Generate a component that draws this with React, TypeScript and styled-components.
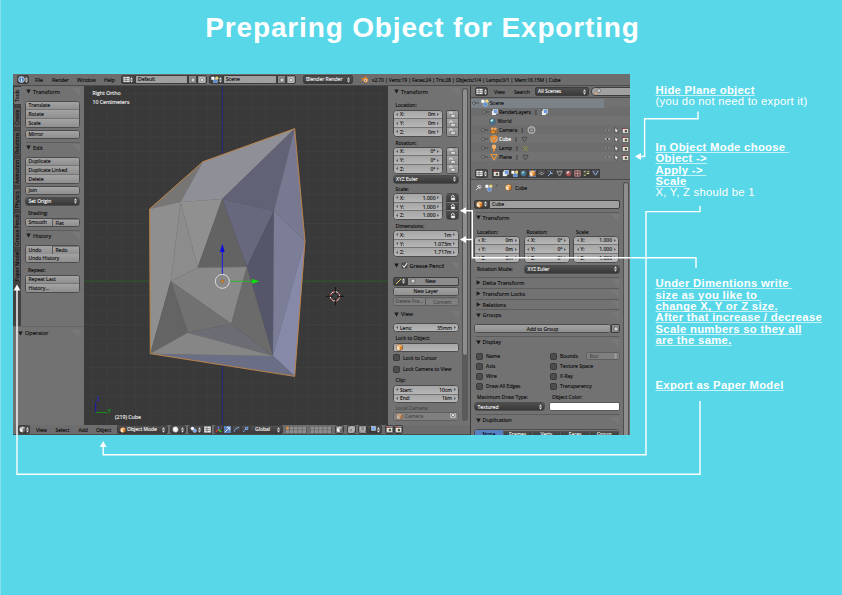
import React from "react";
import styled, { createGlobalStyle, css } from "styled-components";

const Global = createGlobalStyle`
  * { box-sizing: border-box; }
  body { margin: 0; background: #57d7e8; }
  svg { flex: none; }
`;

const Page = styled.main`
  position: relative;
  width: 842px;
  height: 595px;
  overflow: hidden;
  background: #57d7e8;
  border-left: 1px solid #86e1ee;
  font-family: "Liberation Sans", Arial, sans-serif;
  color: #fff;
`;
const Title = styled.h1`
  margin: 0;
  height: 74px;
  padding-top: 10px;
  padding-left: 2px;
  text-align: center;
  font-size: 28px;
  line-height: 36px;
  font-weight: 700;
  letter-spacing: 0.84px;
`;
const Body = styled.div`
  display: flex;
  padding-left: 12px;
`;

/* ---------- side notes ---------- */
const Notes = styled.aside`
  width: 180px;
  flex: none;
  margin-left: 25.5px;
  font-size: 11.3px;
  line-height: 11.33px;
  white-space: pre;
`;
const Note = styled.section<{ $top: number }>`
  margin-top: ${(p) => p.$top}px;
`;
const Strong = styled.div`
  font-weight: 700;
  letter-spacing: 0.3px;
  text-decoration: underline;
  text-decoration-thickness: 1px;
  text-underline-offset: 1px;
  text-decoration-skip-ink: none;
  text-decoration-color: rgba(255, 255, 255, 0.65);
`;
const Plain = styled.div`
  letter-spacing: 0.25px;
`;
const Arrows = styled.svg`
  position: absolute;
  left: -1px;
  top: 0;
  pointer-events: none;
`;

/* ---------- application window ---------- */
const Window = styled.div`
  width: 617px;
  height: 361px;
  flex: none;
  overflow: hidden;
  background: #727272;
  color: #0a0a0a;
  font-family: "Open Sans", "Noto Sans", sans-serif;
  font-size: 5px;
  line-height: 8px;
  -webkit-text-stroke: 0.12px currentColor;
  white-space: nowrap;
  display: flex;
  flex-direction: column;
`;
const Bar = styled.div<{ $h: number }>`
  height: ${(p) => p.$h}px;
  flex: none;
  display: flex;
  align-items: center;
  background: #6d6d6d;
  border-bottom: 1px solid #4b4b4b;
  overflow: hidden;
`;
const Split = styled.div`
  flex: 1;
  min-height: 0;
  display: flex;
`;
const Col = styled.div<{ $w: number }>`
  width: ${(p) => p.$w}px;
  flex: none;
  display: flex;
  flex-direction: column;
  min-height: 0;
`;
const Gap = styled.span<{ $w: number }>`
  width: ${(p) => p.$w}px;
  flex: none;
`;
const MenuItem = styled.span<{ $w: number }>`
  width: ${(p) => p.$w}px;
  flex: none;
`;
const Tabs = styled.div`
  width: 8px;
  height: 240px;
  background: #424242;
  display: flex;
  flex-direction: column;
  gap: 2px;
`;
const Tab = styled.div<{ $h: number; $on?: boolean }>`
  height: ${(p) => p.$h}px;
  width: 8px;
  flex: none;
  border: 1px solid #3c3c3c;
  border-left-width: ${(p) => (p.$on ? 0 : 1)}px;
  border-radius: 0 2px 2px 0;
  background: ${(p) => (p.$on ? "#747474" : "#585858")};
  writing-mode: vertical-rl;
  transform: rotate(180deg);
  text-align: center;
  line-height: 6px;
  font-size: 5px;
`;
const ToolSplit = styled.div`
  display: flex;
  height: 240px;
`;
const Panel = styled.div<{ $px: number; $pr: number }>`
  flex: 1;
  min-width: 0;
  padding: 0 ${(p) => p.$pr}px 0 ${(p) => p.$px}px;
  background: #727272;
  overflow: hidden;
`;
const HeaderRow = styled.div<{ $top: number; $line?: boolean; $in?: number }>`
  display: flex;
  align-items: center;
  height: 10px;
  margin-top: ${(p) => p.$top}px;
  margin-left: ${(p) => p.$in ?? 0}px;
  gap: 2px;
  font-size: 5.5px;
  ${(p) =>
    p.$line &&
    css`
      box-shadow: 0 -1px 0 #5c5c5c;
    `}
  & > svg:last-child {
    margin-left: auto;
  }
`;
const Label = styled.div<{ $top: number; $in?: number; $dim?: boolean }>`
  height: 8px;
  margin-top: ${(p) => p.$top}px;
  padding-left: ${(p) => p.$in ?? 3}px;
  color: ${(p) => (p.$dim ? "#484848" : "#0a0a0a")};
`;
const Group = styled.div<{ $h: number; $top?: number; $w?: number; $num?: boolean; $off?: boolean }>`
  height: ${(p) => p.$h}px;
  margin-top: ${(p) => p.$top ?? 0}px;
  ${(p) => (p.$w ? `width:${p.$w}px; flex:none;` : "")}
  border: 1px solid ${(p) => (p.$off ? "#5f5f5f" : "#4c4c4c")};
  border-radius: ${(p) => (p.$num ? 4 : 2.5)}px;
  overflow: hidden;
  display: flex;
  flex-direction: column;
  background: ${(p) => (p.$off ? "#808080" : p.$num ? "#adadad" : "#999")};
`;
const Cell = styled.div<{ $tone?: "num" | "dark" | "blue" | "off" | "field" }>`
  flex: 1 1 0;
  min-height: 0;
  min-width: 0;
  display: flex;
  align-items: center;
  justify-content: space-between;
  padding: 0 2.5px;
  overflow: hidden;
  background: ${(p) =>
    ({
      num: "linear-gradient(#a6a6a6,#b6b6b6)",
      dark: "linear-gradient(#4e4e4e,#383838)",
      blue: "#5680c2",
      off: "#808080",
      field: "#a5a5a5",
      none: "linear-gradient(#a3a3a3,#8f8f8f)",
    })[p.$tone ?? "none"]};
  color: ${(p) => (p.$tone === "dark" ? "#f4f4f4" : p.$tone === "off" ? "#4a4a4a" : "#0a0a0a")};
  & + & {
    border-top: 1px solid #767676;
  }
`;
const Centered = styled(Cell)`
  justify-content: center;
  padding: 0;
`;
const Across = styled.div`
  flex: 1 1 0;
  min-height: 0;
  display: flex;
  & > div + div {
    border-top: 0;
    border-left: 1px solid #5a5a5a;
  }
`;
const Row = styled.div<{ $top?: number; $gap?: number; $in?: number }>`
  display: flex;
  align-items: flex-start;
  margin-top: ${(p) => p.$top ?? 0}px;
  gap: ${(p) => p.$gap ?? 0}px;
  padding-left: ${(p) => p.$in ?? 0}px;
`;
const Num = styled.span`
  margin-left: auto;
`;
const Key = styled.span`
  margin-left: 2px;
`;
const Pill = styled.div<{ $w: number; $tone?: "dark" | "light" | "blue" | "off" | "field"; $r?: string }>`
  width: ${(p) => p.$w}px;
  height: 9px;
  flex: none;
  display: flex;
  align-items: center;
  justify-content: ${(p) => (p.$w <= 10 ? "center" : "space-between")};
  padding: 0 ${(p) => (p.$w <= 13 ? 0 : p.$w <= 16 ? 1 : 2)}px;
  overflow: hidden;
  border: 1px solid #3d3d3d;
  border-radius: ${(p) => p.$r ?? "2px"};
  line-height: 7px;
  background: ${(p) =>
    ({ dark: "linear-gradient(#505050,#3a3a3a)", light: "#8c8c8c", blue: "#5680c2", off: "#7c7c7c", field: "#a0a0a0" })[
      p.$tone ?? "dark"
    ]};
  color: ${(p) => ((p.$tone ?? "dark") === "dark" ? "#f2f2f2" : "#0a0a0a")};
`;
const CheckRow = styled.div<{ $w?: number; $top?: number }>`
  display: flex;
  align-items: center;
  height: 8px;
  gap: 3.5px;
  margin-top: ${(p) => p.$top ?? 0}px;
  ${(p) => (p.$w ? `width:${p.$w}px; flex:none;` : "")}
`;
const Box = styled.i`
  width: 7px;
  height: 7px;
  flex: none;
  border: 1px solid #3a3a3a;
  border-radius: 1.5px;
  background: #4c4c4c;
`;
const Scroll = styled.div<{ $thumb: number; $top: number; $h: number }>`
  width: 6px;
  flex: none;
  height: ${(p) => p.$h}px;
  margin-top: ${(p) => p.$top}px;
  border-radius: 3px;
  background: #5a5a5a;
  &::before {
    content: "";
    display: block;
    height: ${(p) => p.$thumb}px;
    border-radius: 3px;
    border: 1px solid #505050;
    background: #8e8e8e;
  }
`;
const Viewport = styled.div`
  width: 304px;
  height: 339px;
  flex: none;
  background: #393939;
  position: relative;
  color: #f2f2f2;
`;
const Scene = styled.svg`
  display: block;
`;
const Overlay = styled.div<{ $x: number; $y: number }>`
  position: absolute;
  left: ${(p) => p.$x}px;
  top: ${(p) => p.$y}px;
  font-size: 5.2px;
  line-height: 9px;
`;
const Operator = styled.div`
  height: 99px;
  background: #727272;
  border-top: 1px solid #656565;
  padding: 1px 4px 0 5px;
`;
const Outliner = styled.div`
  height: 70px;
  padding-top: 0.5px;
  background: repeating-linear-gradient(#727272 0 9px, #6d6d6d 9px 18px);
`;
const TreeRow = styled.div<{ $in: number; $hot?: boolean }>`
  height: 9px;
  display: flex;
  align-items: center;
  padding-left: ${(p) => p.$in}px;
  gap: 1.5px;
  background: ${(p) => (p.$hot ? "linear-gradient(90deg,#7b8389 133px,transparent 133px)" : "none")};
`;
const White = styled.span`
  color: #fff;
`;
const Toggles = styled.span`
  margin-left: auto;
  width: 26px;
  flex: none;
  display: flex;
  align-items: center;
  gap: 2px;
`;
const Pipe = styled.span`
  margin: 0 2px;
`;

/* ---------- icons ---------- */
const Tri = ({ open }: { open?: boolean }) => (
  <svg width="5" height="5" viewBox="0 0 5 5">
    <path d={open ? "M.2 .6H4.8L2.5 4.4Z" : "M.6 .2V4.8L4.6 2.5Z"} fill="#1c1c1c" />
  </svg>
);
const Grip = () => (
  <svg width="7" height="7" viewBox="0 0 7 7" stroke="#8a8a8a" strokeWidth=".6">
    <path d="M0 0L7 7M2.5 0L7 4.5M5 0L7 2" />
  </svg>
);
const UpDown = ({ c = "#ddd" }: { c?: string }) => (
  <svg width="3" height="6" viewBox="0 0 3 6">
    <path d="M0 2.4L1.5 .2L3 2.4ZM0 3.6L1.5 5.8L3 3.6Z" fill={c} />
  </svg>
);
const Nub = ({ right }: { right?: boolean }) => (
  <svg width="2" height="3" viewBox="0 0 2 3">
    <path d={right ? "M0 0L2 1.5L0 3Z" : "M2 0L0 1.5L2 3Z"} fill="#5a5a5a" />
  </svg>
);
const Cube = ({ s = 7, dim }: { s?: number; dim?: boolean }) => (
  <svg width={s} height={s} viewBox="0 0 8 8" opacity={dim ? 0.55 : 1}>
    <path d="M4 .4L7.4 1.8V6L4 7.7L.6 6V1.8Z" fill="#d9822b" stroke="#5b3511" strokeWidth=".5" />
    <path d="M4 .6L7.2 1.9L4.2 3.2L.8 1.9Z" fill="#f6c48a" />
    <path d="M.8 2L4.1 3.3V7.5L.8 5.9Z" fill="#fbe3c6" />
  </svg>
);
const GreyCube = () => (
  <svg width="7" height="7" viewBox="0 0 8 8">
    <path d="M4 .4L7.4 1.8V6L4 7.7L.6 6V1.8Z" fill="#777" stroke="#222" strokeWidth=".5" />
    <path d="M.8 1.9L4.1 3.3V7.5L.8 5.9Z" fill="#f2f2f2" />
    <path d="M4 .6L7.2 1.9L4.2 3.2L.8 1.9Z" fill="#c8c8c8" />
  </svg>
);
const Lock = ({ shut }: { shut?: boolean }) => (
  <svg width="7" height="7" viewBox="0 0 8 8">
    <path d={shut ? "M2.8 4V2.3Q4.3 .3 5.8 2.3V4" : "M.8 3.2V1.8Q2.2 .2 3.6 1.8V4"} fill="none" stroke="#eee" strokeWidth="1" />
    <path d="M2.2 4H7V7.2H2.2Z" fill={shut ? "#f4f4f4" : "#dedede"} stroke="#444" strokeWidth=".4" />
  </svg>
);
const Plus = () => (
  <svg width="6" height="6" viewBox="0 0 6 6">
    <path d="M2.2 .5H3.8V2.2H5.5V3.8H3.8V5.5H2.2V3.8H.5V2.2H2.2Z" fill="#eee" stroke="#444" strokeWidth=".5" />
  </svg>
);
const Cross = () => (
  <svg width="6" height="6" viewBox="0 0 6 6">
    <rect x=".4" y=".4" width="5.2" height="5.2" rx="1" fill="none" stroke="#ddd" strokeWidth=".7" />
    <path d="M1.5 1.5L4.5 4.5M4.5 1.5L1.5 4.5" stroke="#eee" strokeWidth=".9" />
  </svg>
);
const Dot = ({ a, b }: { a: string; b?: string }) => (
  <svg width="7" height="7" viewBox="0 0 8 8">
    <circle cx="4" cy="4" r="3.3" fill={a} stroke="#333" strokeWidth=".4" />
    <path d="M1.6 3Q3 .8 5 1.6Q4.6 3.6 2.6 4.4Z" fill={b ?? "#fff"} />
  </svg>
);
const InfoIcon = () => (
  <svg width="7" height="7" viewBox="0 0 8 8">
    <circle cx="4" cy="4" r="3.3" fill="#4a7cc0" stroke="#e8eefa" strokeWidth=".9" />
    <path d="M4 1.8V2.8M4 3.5V6.2" stroke="#fff" strokeWidth="1.1" />
  </svg>
);
const Sheet = ({ a = "#eee", b = "#6d9be0" }: { a?: string; b?: string }) => (
  <svg width="7" height="7" viewBox="0 0 8 8">
    <rect x=".8" y="1.5" width="5" height="5.6" fill={a} stroke="#444" strokeWidth=".4" />
    <rect x="3" y=".6" width="4.3" height="4.3" fill={b} stroke="#eee" strokeWidth=".6" />
  </svg>
);
const SceneIcon = () => (
  <svg width="8" height="8" viewBox="0 0 8 8">
    <rect x=".4" y=".8" width="3" height="3" fill="#fff" />
    <circle cx="5.8" cy="2.2" r="1.6" fill="#f0d77a" />
    <circle cx="4.4" cy="5.4" r="2.1" fill="#5b8fd6" stroke="#dde" strokeWidth=".4" />
  </svg>
);
const Stroke = ({ d, c = "#ddd", s = 7 }: { d: string; c?: string; s?: number }) => (
  <svg width={s} height={s} viewBox="0 0 8 8">
    <path d={d} fill="none" stroke={c} strokeWidth="1.1" strokeLinejoin="round" />
  </svg>
);
const EditorIcon = () => (
  <svg width="7" height="7" viewBox="0 0 8 8">
    <rect x=".5" y="1" width="7" height="6" fill="#eee" />
    <path d="M1 3H7M1 5H7M3.5 1V7" stroke="#555" strokeWidth=".7" />
  </svg>
);
const MESH = "M1 1.5H7L4 7Z";
const CamIcon = () => (
  <svg width="8" height="7" viewBox="0 0 9 8">
    <circle cx="2.6" cy="2.2" r="1.7" fill="#f0a050" />
    <circle cx="6" cy="2.2" r="1.7" fill="#f0a050" />
    <path d="M.8 4H6V7.4H.8ZM6 5.5L8.6 4.2V7.2Z" fill="#e88a2d" stroke="#7a4310" strokeWidth=".4" />
  </svg>
);
const Eye = ({ on }: { on?: boolean }) => (
  <svg width="7" height="6" viewBox="0 0 8 6" opacity={on ? 1 : 0.3}>
    <path d="M.5 3Q4 -.5 7.5 3Q4 6 .5 3Z" fill="#eee" stroke="#333" strokeWidth=".3" />
    <circle cx="4" cy="3" r="1.2" fill="#222" />
  </svg>
);
const Pointer = () => (
  <svg width="7" height="7" viewBox="0 0 8 8">
    <path d="M2.2 .6L6.6 4.8L4.6 5L5.6 7.2L4.4 7.6L3.5 5.5L2.2 6.5Z" fill="#f4f4f4" stroke="#222" strokeWidth=".6" />
  </svg>
);
const Photo = () => (
  <svg width="7" height="7" viewBox="0 0 8 8">
    <rect x=".5" y="2" width="7" height="5" fill="#e4e4e4" stroke="#333" strokeWidth=".5" />
    <path d="M1 1.5H4" stroke="#c33" />
    <circle cx="4.5" cy="4.5" r="1.5" fill="#553" />
  </svg>
);

/* ---------- composed parts ---------- */
type HeaderProps = { t: string; top: number; open?: boolean; line?: boolean; x?: number; mid?: React.ReactNode };
const Header = ({ t, top, open = true, line, x, mid }: HeaderProps) => (
  <HeaderRow $top={top} $line={line} $in={x}>
    <Tri open={open} />
    {mid}
    <span>{t}</span>
    <Grip />
  </HeaderRow>
);
const NumCell = ({ k, v }: { k: string; v: string }) => (
  <Cell $tone="num">
    <Nub />
    <Key>{k}</Key>
    <Num>{v}</Num>
    <Gap $w={1.5} />
    <Nub right />
  </Cell>
);
const XYZ = ({ v, w, top = 0 }: { v: string[]; w: number; top?: number }) => (
  <Group $num $h={27} $w={w} $top={top}>
    {["X:", "Y:", "Z:"].map((k, i) => (
      <NumCell key={k} k={k} v={v[i]} />
    ))}
  </Group>
);
const Locks = ({ shut }: { shut?: boolean }) => (
  <Group $h={27} $w={13}>
    {[0, 1, 2].map((i) => (
      <Centered key={i} $tone={shut ? "dark" : undefined}>
        <Lock shut={shut} />
      </Centered>
    ))}
  </Group>
);
const Drop = ({ t, h = 9, top = 0, w, off }: { t: string; h?: number; top?: number; w?: number; off?: boolean }) => (
  <Group $h={h} $top={top} $w={w} $off={off}>
    <Cell $tone={off ? "off" : "dark"}>
      {t}
      <UpDown c={off ? "#aaa" : "#ddd"} />
    </Cell>
  </Group>
);
const Check = ({ t, w, top }: { t: string; w?: number; top?: number }) => (
  <CheckRow $w={w} $top={top}>
    <Box />
    {t}
  </CheckRow>
);

const TopBar = () => (
  <Bar $h={12}>
    <Gap $w={4} />
    <Pill $w={12}>
      <InfoIcon />
      <UpDown />
    </Pill>
    <Gap $w={6} />
    <MenuItem $w={17}>File</MenuItem>
    <MenuItem $w={25}>Render</MenuItem>
    <MenuItem $w={27}>Window</MenuItem>
    <MenuItem $w={17}>Help</MenuItem>
    <Pill $w={14} $r="2px 0 0 2px">
      <EditorIcon />
      <UpDown />
    </Pill>
    <Pill $w={53} $tone="field" $r="0">
      Default
    </Pill>
    <Pill $w={9} $tone="light" $r="0">
      <Plus />
    </Pill>
    <Pill $w={10} $tone="light" $r="0 2px 2px 0">
      <Cross />
    </Pill>
    <Gap $w={2} />
    <Pill $w={14} $r="2px 0 0 2px">
      <SceneIcon />
      <UpDown />
    </Pill>
    <Pill $w={54} $tone="field" $r="0">
      Scene
    </Pill>
    <Pill $w={9} $tone="light" $r="0">
      <Plus />
    </Pill>
    <Pill $w={10} $tone="light" $r="0 2px 2px 0">
      <Cross />
    </Pill>
    <Gap $w={7} />
    <Pill $w={50}>
      <span>Blender Render</span>
      <UpDown />
    </Pill>
    <Gap $w={8} />
    <svg width="8" height="7" viewBox="0 0 9 8">
      <path d="M.5 5.4L5 1.2L7.5 3M.8 3H5" stroke="#f08a24" strokeWidth="1.1" fill="none" />
      <circle cx="5.4" cy="4.8" r="2.6" fill="#f08a24" />
      <circle cx="5.4" cy="4.8" r="1.4" fill="#fff" />
      <circle cx="5.4" cy="4.8" r=".8" fill="#2a5a9a" />
    </svg>
    <Gap $w={3} />
    <Status>v2.70 | Verts:19 | Faces:24 | Tris:28 | Objects:1/4 | Lamps:0/1 | Mem:16.15M | Cube</Status>
  </Bar>
);
const Status = styled.span`
  letter-spacing: -0.11px;
`;

const ToolShelf = () => (
  <Col $w={71}>
    <ToolSplit>
      <Tabs>
        <Tab $h={19} $on>Tools</Tab>
        <Tab $h={21}>Create</Tab>
        <Tab $h={26}>Relations</Tab>
        <Tab $h={28}>Animation</Tab>
        <Tab $h={22}>Physics</Tab>
        <Tab $h={36}>Grease Pencil</Tab>
        <Tab $h={32}>Paper Model</Tab>
      </Tabs>
      <Panel $px={4} $pr={4}>
        <Header t="Transform" top={0.5} x={1} />
        <Group $h={27} $top={4}>
          <Cell>Translate</Cell>
          <Cell>Rotate</Cell>
          <Cell>Scale</Cell>
        </Group>
        <Group $h={9} $top={2}>
          <Cell>Mirror</Cell>
        </Group>
        <Header t="Edit" top={4} line x={1} />
        <Group $h={27} $top={4}>
          <Cell>Duplicate</Cell>
          <Cell>Duplicate Linked</Cell>
          <Cell>Delete</Cell>
        </Group>
        <Group $h={9} $top={2}>
          <Cell>Join</Cell>
        </Group>
        <Drop t="Set Origin" top={2} />
        <Label $top={3}>Shading:</Label>
        <Group $h={9} $top={1}>
          <Across>
            <Cell>Smooth</Cell>
            <Cell>Flat</Cell>
          </Across>
        </Group>
        <Header t="History" top={4} line x={1} />
        <Group $h={18} $top={4}>
          <Across>
            <Cell>Undo</Cell>
            <Cell>Redo</Cell>
          </Across>
          <Cell>Undo History</Cell>
        </Group>
        <Label $top={3}>Repeat:</Label>
        <Group $h={18} $top={1}>
          <Cell>Repeat Last</Cell>
          <Cell>History...</Cell>
        </Group>
      </Panel>
    </ToolSplit>
    <Operator>
      <Header t="Operator" top={0} />
    </Operator>
  </Col>
);

const FACES: [string, string][] = [
  ["59,297 219,155 152,276", "#787674"],
  ["219,155 494,56 277,267 152,276", "#8f8f97"],
  ["59,297 152,276 122,514 61,731", "#8f8f8f"],
  ["152,276 277,267 203,473", "#909090"],
  ["152,276 203,473 122,514", "#8c8c8c"],
  ["277,267 203,473 351,471", "#636363"],
  ["277,267 494,56 432,303", "#616276"],
  ["277,267 432,303 351,471", "#67687d"],
  ["432,303 351,471 429,738", "#55566a"],
  ["494,56 432,303 525,393", "#787991"],
  ["432,303 525,393 429,738", "#7c7d97"],
  ["525,393 494,799 429,738", "#8789a8"],
  ["61,731 429,738 494,799", "#6b6f86"],
  ["122,514 203,473 351,471 304,641", "#898989"],
  ["351,471 304,641 429,738", "#6b6b6b"],
  ["122,514 304,641 173,668", "#717171"],
  ["122,514 173,668 61,731", "#646464"],
  ["173,668 304,641 429,738", "#6c6d74"],
  ["173,668 429,738 61,731", "#868686"],
];
const GRID = 14.43;
const View3D = () => (
  <Viewport>
    <Scene width="304" height="339" viewBox="0 0 304 339">
      <g stroke="#3f3f3f" strokeWidth="1">
        {Array.from({ length: 21 }, (_, i) => (
          <path key={`v${i}`} d={`M${138.3 + (i - 9) * GRID} 0V339`} />
        ))}
        {Array.from({ length: 23 }, (_, i) => (
          <path key={`h${i}`} d={`M0 ${195.2 + (i - 13) * GRID}H304`} />
        ))}
      </g>
      <path d="M0 195.2H304" stroke="#2c5a2c" />
      <path d="M138.4 0V339" stroke="#27277c" />
      <g transform="translate(46 24) scale(.33333)">
        {FACES.map(([p, c]) => (
          <polygon key={p} points={p} fill={c} stroke={c} strokeWidth=".8" />
        ))}
        <polygon points="59,297 219,155 494,56 525,393 494,799 61,731" fill="none" stroke="#c08444" strokeWidth="2.8" />
        <path d="M277 493V424" stroke="#1818e0" strokeWidth="3" />
        <path d="M277 401L284 426H270Z" fill="#0a0ae0" />
        <path d="M299 514H366" stroke="#20c020" strokeWidth="2.5" />
        <path d="M389 514L366 507V521Z" fill="#0be00b" />
        <circle cx="277" cy="514" r="21" fill="none" stroke="#e6e6e6" strokeWidth="2.6" />
        <circle cx="277" cy="514" r="4.5" fill="#e08a30" stroke="#5a3a1a" />
        <circle cx="615" cy="559" r="14" fill="none" stroke="#f0f0f0" strokeWidth="3" />
        <circle cx="615" cy="559" r="14" fill="none" stroke="#c02020" strokeWidth="3" strokeDasharray="7.3 7.3" />
        <path d="M588 559H608M622 559H642M616 531V552M616 566V586" stroke="#0c0c0c" strokeWidth="2.5" />
      </g>
      <path d="M11.7 316V326.5" stroke="#1a1ab0" />
      <path d="M11.5 326.5H23" stroke="#149014" />
      <path d="M13 311.5H15L13 314.5H15" stroke="#2222d0" strokeWidth=".8" fill="none" />
      <path d="M24 323L25.2 325M26.6 322.6L24.4 327.6" stroke="#14a014" strokeWidth=".8" />
    </Scene>
    <Overlay $x={8.5} $y={3}>Right Ortho</Overlay>
    <Overlay $x={8.5} $y={12}>10 Centimeters</Overlay>
    <Overlay $x={31} $y={327}>(219) Cube</Overlay>
  </Viewport>
);

const NPanel = () => (
  <Split>
    <Panel $px={4.5} $pr={3}>
      <Header t="Transform" top={0.5} x={1.5} />
      <Label $top={4}>Location:</Label>
      <Row $top={1} $gap={3}>
        <XYZ w={50} v={["0m", "0m", "0m"]} />
        <Locks />
      </Row>
      <Label $top={2}>Rotation:</Label>
      <Row $gap={3}>
        <XYZ w={50} v={["0°", "0°", "0°"]} />
        <Locks />
      </Row>
      <Drop t="XYZ Euler" top={1} />
      <Label $top={1.5}>Scale:</Label>
      <Row $gap={3}>
        <XYZ w={50} v={["1.000", "1.000", "1.000"]} />
        <Locks shut />
      </Row>
      <Label $top={1.5}>Dimensions:</Label>
      <XYZ w={66} top={0.5} v={["1m", "1.073m", "1.717m"]} />
      <Header
        t="Grease Pencil"
        top={3.5}
        x={1}
        mid={
          <svg width="7" height="7" viewBox="0 0 8 8">
            <rect x=".5" y=".5" width="7" height="7" rx="1" fill="#4c4c4c" />
            <path d="M1.8 4L3.6 6L7 1.2" stroke="#f4f4f4" strokeWidth="1.2" fill="none" />
          </svg>
        }
      />
      <Row $top={6}>
        <Pill $w={14} $r="2px 0 0 2px">
          <Stroke d="M1 7L7 1" c="#e8d060" />
          <UpDown />
        </Pill>
        <Pill $w={52} $tone="light" $r="0 2px 2px 0">
          <Plus />
          <span>New</span>
          <Gap $w={10} />
        </Pill>
      </Row>
      <Group $h={9} $top={1}>
        <Centered>New Layer</Centered>
      </Group>
      <Group $h={9} $top={1} $off>
        <Across>
          <Centered $tone="off">Delete Fra...</Centered>
          <Centered $tone="off">Convert</Centered>
        </Across>
      </Group>
      <Header t="View" top={3.5} x={1.5} />
      <Group $h={9} $top={4} $num>
        <NumCell k="Lens:" v="35mm" />
      </Group>
      <Label $top={2}>Lock to Object:</Label>
      <Group $h={9} $top={1}>
        <Cell $tone="num">
          <Cube />
        </Cell>
      </Group>
      <Check t="Lock to Cursor" top={1.5} />
      <Check t="Lock Camera to View" top={3.5} />
      <Label $top={3}>Clip:</Label>
      <Group $h={18} $top={1} $num>
        <NumCell k="Start:" v="10cm" />
        <NumCell k="End:" v="1km" />
      </Group>
      <Label $top={0.5} $dim>Local Camera:</Label>
      <Group $h={9} $off>
        <Cell $tone="off">
          <Cube dim />
          <Gap $w={2} />
          Camera
          <Num>
            <Cross />
          </Num>
        </Cell>
      </Group>
    </Panel>
    <Scroll $top={2} $h={333} $thumb={266} />
    <Gap $w={2} />
  </Split>
);

const Layers = ({ active }: { active?: boolean }) => (
  <svg width="22" height="8" viewBox="0 0 22 8">
    <rect width="22" height="8" rx="1.5" fill="#555" />
    {Array.from({ length: 10 }, (_, i) => (
      <rect key={i} x={0.6 + (i % 5) * 4.2} y={0.5 + Math.floor(i / 5) * 3.6} width="3.7" height="3.2" fill="#8e8e8e" />
    ))}
    {active && <circle cx="2.4" cy="2.1" r="1.3" fill="#e88a2d" />}
  </svg>
);
const Footer = () => (
  <Bar $h={10}>
    <Gap $w={5} />
    <Pill $w={12}>
      <GreyCube />
      <UpDown />
    </Pill>
    <Gap $w={6} />
    <MenuItem $w={19.5}>View</MenuItem>
    <MenuItem $w={23}>Select</MenuItem>
    <MenuItem $w={17.5}>Add</MenuItem>
    <MenuItem $w={21}>Object</MenuItem>
    <Pill $w={51}>
      <Cube s={6} />
      Object Mode
      <Gap $w={3} />
      <UpDown />
    </Pill>
    <Gap $w={2} />
    <Pill $w={16}>
      <Dot a="#eee" />
      <UpDown />
    </Pill>
    <Gap $w={2} />
    <Pill $w={15} $r="2px 0 0 2px">
      <svg width="7" height="7" viewBox="0 0 8 8">
        <circle cx="2.8" cy="2.8" r="2" fill="#eef" />
        <circle cx="5.4" cy="5.4" r="2" fill="#6fa0e8" stroke="#eef" strokeWidth=".5" />
      </svg>
      <UpDown />
    </Pill>
    <Pill $w={9} $tone="light" $r="0">
      <EditorIcon />
    </Pill>
    <Gap $w={2} />
    <Pill $w={9} $r="2px 0 0 2px">
      <svg width="7" height="7" viewBox="0 0 8 8" strokeWidth="1.4">
        <path d="M4 4V.5" stroke="#66f" />
        <path d="M4 4L.8 7" stroke="#e33" />
        <path d="M4 4L7.2 7" stroke="#3d3" />
      </svg>
    </Pill>
    <Pill $w={9} $tone="blue" $r="0">
      <Stroke d="M1 7L6 2M3 1.5H6.5V5" />
    </Pill>
    <Pill $w={9} $r="0">
      <Stroke d="M1 7Q2 2 7 1.5" c="#79a7e8" />
    </Pill>
    <Pill $w={9} $r="0">
      <Stroke d="M1 7L5 3M4 1.5H6.5V4H4Z" c="#79a7e8" />
    </Pill>
    <Pill $w={33} $r="0 2px 2px 0">
      <Key>Global</Key>
      <UpDown />
    </Pill>
    <Gap $w={2} />
    <Layers active />
    <Gap $w={3} />
    <Layers />
    <Gap $w={3} />
    <Pill $w={9} $tone="light"><GreyCube /></Pill>
    <Gap $w={3} />
    <Pill $w={9} $tone="light"><Stroke d="M1 2.5H5.5V7H1ZM3 2.5V1H7V5H5.5" c="#c4c4c4" /></Pill>
    <Gap $w={2} />
    <Pill $w={9} $tone="light" $r="2px 0 0 2px"><Stroke d="M1.5 1V4Q4 9 6.5 4V1" c="#c4c4c4" /></Pill>
    <Pill $w={15} $r="0 2px 2px 0">
      <Sheet a="#333" b="#7ab0f0" />
      <UpDown />
    </Pill>
    <Gap $w={3} />
    <Pill $w={9} $tone="light"><Photo /></Pill>
    <Pill $w={9} $tone="light"><Photo /></Pill>
  </Bar>
);

const restrict = (on?: boolean) => (
  <Toggles>
    <Eye on={on} />
    <Pointer />
    <Photo />
  </Toggles>
);
const Knob = () => (
  <svg width="7" height="4" viewBox="0 0 7 4">
    <path d="M3 2H7" stroke="#333" strokeWidth=".6" />
    <circle cx="2" cy="2" r="1.3" fill="#bbb" stroke="#222" strokeWidth=".6" />
  </svg>
);
const OutlinerEditor = () => (
  <>
    <Bar $h={12}>
      <Gap $w={4} />
      <Pill $w={13}>
        <EditorIcon />
        <UpDown />
      </Pill>
      <Gap $w={6} />
      <MenuItem $w={20}>View</MenuItem>
      <MenuItem $w={21}>Search</MenuItem>
      <Pill $w={54}>
        <span>All Scenes</span>
        <UpDown />
      </Pill>
      <Gap $w={2} />
      <Pill $w={44} $tone="field" $r="4px">
        <svg width="8" height="7" viewBox="0 0 8 8">
          <circle cx="5" cy="3" r="2.2" fill="#ccc" stroke="#666" strokeWidth=".8" />
          <path d="M3.4 4.6L.8 7.2" stroke="#f0a050" strokeWidth="1.2" />
        </svg>
      </Pill>
    </Bar>
    <Outliner>
      <TreeRow $in={1} $hot><Knob /><SceneIcon />Scene</TreeRow>
      <TreeRow $in={11}><Knob /><Sheet />RenderLayers<Pipe>|</Pipe><Sheet /></TreeRow>
      <TreeRow $in={18}><Dot a="#4a7a9a" b="#cfe" />World</TreeRow>
      <TreeRow $in={10}>
        <Knob /><CamIcon />Camera<Pipe>|</Pipe>
        <svg width="9" height="8" viewBox="0 0 9 8">
          <circle cx="4.5" cy="4" r="3.6" fill="#999" stroke="#ccc" strokeWidth=".6" />
          <path d="M2.5 3H6.5V5.5H2.5Z" stroke="#555" strokeWidth=".6" fill="none" />
        </svg>
        {restrict()}
      </TreeRow>
      <TreeRow $in={10}>
        <Knob />
        <svg width="8" height="8" viewBox="0 0 8 8">
          <circle cx="4" cy="4" r="3.8" fill="#c9a27a" />
          <path d={MESH} fill="none" stroke="#e8801c" strokeWidth="1.2" />
        </svg>
        <White>Cube</White><Pipe>|</Pipe><Stroke d={MESH} c="#4c4c4c" />{restrict(true)}
      </TreeRow>
      <TreeRow $in={10}>
        <Knob />
        <svg width="8" height="8" viewBox="0 0 8 8">
          <circle cx="4" cy="2.8" r="2.2" fill="#f6b56a" />
          <path d="M3 5H5V7.5H3Z" fill="#e88a2d" />
        </svg>
        Lamp<Pipe>|</Pipe>
        <Stroke d="M1 1L7 7M7 1L1 7M4 2V6" c="#8a8a45" />
        {restrict()}
      </TreeRow>
      <TreeRow $in={10}><Knob /><Stroke d={MESH} c="#f09a40" s={8} />Plane<Pipe>|</Pipe><Stroke d={MESH} c="#4c4c4c" />{restrict()}</TreeRow>
    </Outliner>
  </>
);

const PropertyTabs = () => (
  <Bar $h={12}>
    <Gap $w={4} />
    <Pill $w={13}>
      <EditorIcon />
      <UpDown />
    </Pill>
    <Gap $w={4} />
    {[
      <Photo />,
      <Sheet />,
      <SceneIcon />,
      <Dot a="#4a7a9a" b="#9cc" />,
      <Cube />,
      <Stroke d="M1 5L3 3H5M3 5H5L7 3" c="#aaa" />,
      <Stroke d="M1 7L5 3M4 1.5V4H6.5" c="#8ab0e8" />,
      <Stroke d={MESH} c="#999" />,
      <Dot a="#a55" b="#ddd" />,
      <Stroke d="M1 1H7V7H1ZM1 4H7M4 1V7" c="#c88" />,
      <Stroke d="M1 2H3M5 2H7M1 6H3M4 4H7" c="#dd8" />,
      <Stroke d="M1 1L4 6L7 1" c="#8ab0e8" />,
    ].map((icon, i) => (
      <Pill key={i} $w={9} $tone={i === 4 ? "blue" : "dark"} $r="0">
        {icon}
      </Pill>
    ))}
  </Bar>
);

const PropColumn = styled.div<{ $w: number }>`
  width: ${(p) => p.$w}px;
  flex: none;
`;
const Swatch = styled.div`
  width: 71px;
  height: 9px;
  flex: none;
  border: 1px solid #5a5a5a;
  border-radius: 2px;
  background: #fff;
`;
const Properties = () => (
  <Split>
    <Panel $px={3} $pr={4}>
      <Row $top={4} $gap={3} $in={1}>
        <Stroke d="M1 7L4 4M3 2L6 5M5 1L7 3L5 5L3 3Z" c="#ddd" />
        <SceneIcon />
        <Nub right />
        <Gap $w={1} />
        <Cube />
        Cube
      </Row>
      <Row $top={7.5}>
        <Pill $w={15} $r="2px 0 0 2px">
          <Cube />
          <UpDown />
        </Pill>
        <Pill $w={131} $tone="field" $r="0 2px 2px 0">
          Cube
        </Pill>
      </Row>
      <Header t="Transform" top={4} line x={1.5} />
      <Row $top={5} $gap={3.5}>
        {[
          ["Location:", "0m"],
          ["Rotation:", "0°"],
          ["Scale:", "1.000"],
        ].map(([t, v]) => (
          <PropColumn key={t} $w={46}>
            <Label $top={0}>{t}</Label>
            <XYZ w={46} v={[v, v, v]} />
          </PropColumn>
        ))}
      </Row>
      <Row $top={2} $in={3}>
        <PropColumn $w={47}>Rotation Mode:</PropColumn>
        <Drop t="XYZ Euler" w={96} />
      </Row>
      <Header t="Delta Transform" top={4} line open={false} x={1.5} />
      <Header t="Transform Locks" top={1} line open={false} x={1.5} />
      <Header t="Relations" top={1} line open={false} x={1.5} />
      <Header t="Groups" top={0.5} line x={1.5} />
      <Row $top={4}>
        <Group $h={9} $w={137}>
          <Centered>Add to Group</Centered>
        </Group>
        <Pill $w={9} $tone="light" $r="0 2px 2px 0">
          <Plus />
        </Pill>
      </Row>
      <Header t="Display" top={4} line x={1.5} />
      <Row $top={5} $in={1.5}>
        <Check t="Name" w={74} />
        <Check t="Bounds" w={36.5} />
        <Drop t="Box" w={34} h={8} off />
      </Row>
      <Row $top={2} $in={1.5}>
        <Check t="Axis" w={74} />
        <Check t="Texture Space" />
      </Row>
      <Row $top={2} $in={1.5}>
        <Check t="Wire" w={74} />
        <Check t="X-Ray" />
      </Row>
      <Row $top={2} $in={1.5}>
        <Check t="Draw All Edges" w={74} />
        <Check t="Transparency" />
      </Row>
      <Row $top={3} $in={3}>
        <PropColumn $w={75}>Maximum Draw Type:</PropColumn>
        Object Color:
      </Row>
      <Row $top={1} $gap={4}>
        <Drop t="Textured" w={71} />
        <Swatch />
      </Row>
      <Header t="Duplication" top={4} line x={1.5} />
      <Group $h={10} $top={3.5}>
        <Across>
          <Centered $tone="blue">None</Centered>
          {["Frames", "Verts", "Faces", "Group"].map((t) => (
            <Centered key={t} $tone="dark">
              {t}
            </Centered>
          ))}
        </Across>
      </Group>
    </Panel>
    <Scroll $top={2} $h={300} $thumb={300} />
    <Gap $w={1} />
  </Split>
);

const RightSide = styled(Col)`
  border-left: 1px solid #3a3a3a;
`;

export default function App() {
  return (
    <>
      <Global />
      <Page>
        <Title>Preparing Object for Exporting</Title>
        <Body>
          <Window>
            <TopBar />
            <Split>
              <Col $w={457}>
                <Split>
                  <ToolShelf />
                  <View3D />
                  <NPanel />
                </Split>
                <Footer />
              </Col>
              <RightSide $w={160}>
                <OutlinerEditor />
                <PropertyTabs />
                <Properties />
              </RightSide>
            </Split>
          </Window>
          <Notes>
            <Note $top={11}>
              <Strong>Hide Plane object</Strong>
              <Plain>(you do not need to export it)</Plain>
            </Note>
            <Note $top={34.5}>
              <Strong>{"In Object Mode choose "}</Strong>
              <Strong>{"Object ->"}</Strong>
              <Strong>{"Apply -> "}</Strong>
              <Strong>Scale</Strong>
              <Plain>X, Y, Z should be 1</Plain>
            </Note>
            <Note $top={79.5}>
              <Strong>{"Under Dimentions write "}</Strong>
              <Strong>{"size as you like to "}</Strong>
              <Strong>change X, Y or Z size.</Strong>
              <Strong>After that increase / decrease</Strong>
              <Strong>Scale numbers so they all</Strong>
              <Strong>are the same.</Strong>
            </Note>
            <Note $top={34}>
              <Strong>Export as Paper Model</Strong>
            </Note>
          </Notes>
        </Body>
        <Arrows width="842" height="595" viewBox="0 0 842 595">
          <g fill="none" stroke="#fff" strokeWidth="1.4">
            <path d="M698 111.5V118.7H644.6V156.5H640" />
            <path d="M700 206V211.6H646V454.7H103.2V446" />
            <path d="M696 268V257.7H472.3V210.7H465M472.3 239.5H465" />
            <path d="M700 401V474.2H17V289" />
          </g>
          <path
            d="M635 156.5L641 153V160ZM103.2 441L106.6 447H99.8ZM460 210.7L466 207.3V214.1ZM460 239.5L466 236.1V242.9ZM17 284.5L20.4 290.5H13.6Z"
            fill="#fff"
          />
        </Arrows>
      </Page>
    </>
  );
}
